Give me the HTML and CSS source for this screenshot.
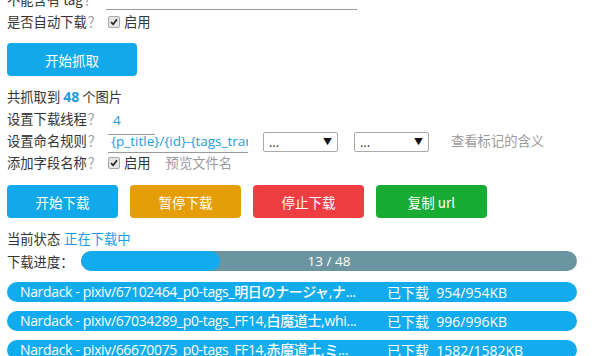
FILE: index.html
```html
<!DOCTYPE html>
<html lang="zh-CN">
<head>
<meta charset="utf-8">
<title>下载</title>
<link rel="stylesheet" href="styles.css">
</head>
<body>
<div class="panel">
  <div class="row">
    <span class="label">不能含有 tag<span class="q">？</span></span>
    <span class="line wide"></span>
  </div>
  <div class="row">
    <span class="label">是否自动下载<span class="q">？</span></span>
    <span class="check"><svg viewBox="0 0 12 12" width="12" height="12"><path d="M2.5 6.2 L5 8.8 L9.6 2.8" fill="none" stroke="#222" stroke-width="2"/></svg></span>
    <span class="opt">启用</span>
  </div>
  <div class="btn-row">
    <button class="btn blue">开始抓取</button>
  </div>
  <div class="row">共抓取到 <b class="num">48</b> 个图片</div>
  <div class="row">
    <span class="label">设置下载线程<span class="q">？</span></span>
    <span class="field thread">4</span>
  </div>
  <div class="row">
    <span class="label">设置命名规则<span class="q">？</span></span>
    <span class="field name">{p_title}/{id}-{tags_tran</span>
    <span class="select">...<span class="arrow">▼</span></span>
    <span class="select">...<span class="arrow">▼</span></span>
    <span class="muted hint">查看标记的含义</span>
  </div>
  <div class="row">
    <span class="label">添加字段名称<span class="q">？</span></span>
    <span class="check"><svg viewBox="0 0 12 12" width="12" height="12"><path d="M2.5 6.2 L5 8.8 L9.6 2.8" fill="none" stroke="#222" stroke-width="2"/></svg></span>
    <span class="opt">启用</span>
    <span class="muted preview">预览文件名</span>
  </div>
  <div class="actions">
    <button class="btn blue">开始下载</button>
    <button class="btn orange">暂停下载</button>
    <button class="btn red">停止下载</button>
    <button class="btn green">复制 url</button>
  </div>
  <div class="row">当前状态 <span class="status">正在下载中</span></div>
  <div class="row progress-row">
    <span class="plabel">下载进度：</span>
    <div class="bar">
      <div class="fill" style="width:28%"></div>
      <span class="bar-text">13 / 48</span>
    </div>
  </div>
  <ul class="list">
    <li class="item"><span class="fname">Nardack - pixiv/67102464_p0-tags_明日のナージャ,ナ...</span><span class="size"><span class="done">已下载</span>&nbsp;&nbsp;954/954KB</span></li>
    <li class="item"><span class="fname">Nardack - pixiv/67034289_p0-tags_FF14,白魔道士,whi...</span><span class="size"><span class="done">已下载</span>&nbsp;&nbsp;996/996KB</span></li>
    <li class="item"><span class="fname">Nardack - pixiv/66670075_p0-tags_FF14,赤魔道士,ミ...</span><span class="size"><span class="done">已下载</span>&nbsp;&nbsp;1582/1582KB</span></li>
  </ul>
</div>
</body>
</html>
```
FILE: styles.css
```css
* { box-sizing: border-box; }
html, body { margin: 0; padding: 0; background: #fff; overflow: hidden; }
body {
  font-family: "Noto Sans CJK SC", "Noto Sans", sans-serif;
  font-size: 13.3px;
  color: #333;
}
.panel {
  padding: 0 7px;
  margin-top: -11px;
}
.row {
  display: flex;
  align-items: center;
  height: 22px;
  line-height: 22px;
  white-space: nowrap;
}
.label { width: 101px; flex: none; }
.q { color: #999; margin-left: 1px; }
.line.wide {
  width: 251px;
  margin-left: -2px;
  height: 20px;
  border-bottom: 1px solid #999;
}
.check {
  width: 12px; height: 12px;
  border: 1px solid #a8a8a8;
  border-radius: 2px;
  background: #e6e6e6;
  display: inline-flex;
  align-items: center; justify-content: center;
  margin-right: 4px;
}
.check svg { width: 10px; height: 10px; }
.opt { color: #333; }
.btn {
  border: none;
  border-radius: 4px;
  color: #fff;
  font-family: inherit;
  font-size: 13.5px;
  height: 33px;
  width: 130px;
  padding: 0;
  cursor: pointer;
}
.btn-row { margin: 10px 0 10px; height: 33px; display: flex; }
.blue { background: #12a9eb; }
.orange { background: #e59e08; }
.red { background: #ef3e42; }
.green { background: #19ac34; }
.num { color: #1a9be0; font-family: "Open Sans", sans-serif; font-size: 14px; margin: 0 3px; }
.field {
  color: #1a9be0;
  border-bottom: 1px solid #999;
  height: 22px;
  line-height: 20px;
  padding-left: 5px;
  overflow: hidden;
  font-family: "Open Sans", "Noto Sans CJK SC", sans-serif;
  font-size: 13.5px;
}
.thread { width: 47px; margin-top: 10px; line-height: 14px; height: 22px; }
.name { width: 140px; margin-top: 2px; height: 22px; padding-left: 3px; }
.select {
  width: 75px; height: 20px;
  border: 1px solid #aaa;
  border-radius: 2px;
  margin-left: 15px;
  padding: 0 5px;
  display: flex;
  align-items: center;
  justify-content: space-between;
  line-height: 18px;
  font-size: 12px;
  color: #333;
  margin-top: 1px;
}
.select + .select { margin-left: 16px; }
.arrow { font-size: 9px; color: #111; }
.muted { color: #9a9a9a; }
.hint { margin-left: 22px; }
.preview { margin-left: 15px; }
.actions {
  display: flex;
  gap: 12px;
  margin: 11px 0 10px;
}
.actions .btn { width: 111px; }
.status { color: #1a9be0; margin-left: 4px; }
.progress-row { height: 22px; margin-bottom: 10px; }
.plabel { width: 74px; flex: none; margin-top: 2px; }
.bar {
  position: relative;
  width: 496px;
  height: 20px;
  border-radius: 10px;
  background: #6b95a1;
  overflow: hidden;
  margin-top: -1px;
}
.fill {
  height: 100%;
  border-radius: 10px;
  background: #12acee;
}
.bar-text {
  position: absolute;
  left: 0; right: 0; top: 0;
  text-align: center;
  color: #fff;
  line-height: 20px;
  font-size: 13.5px;
  font-family: "Open Sans", "Noto Sans CJK SC", sans-serif;
}
.list {
  list-style: none;
  margin: 0;
  padding: 0;
  display: flex;
  flex-direction: column;
  gap: 9px;
}
.item {
  width: 570px;
  height: 20px;
  border-radius: 10px;
  background: #12acee;
  color: #fff;
  display: flex;
  align-items: center;
  padding-left: 13px;
  white-space: nowrap;
  font-size: 14px;
  line-height: 20px;
  font-family: "Open Sans", "Noto Sans CJK SC", sans-serif;
  font-weight: 500;
  letter-spacing: -0.35px;
}
.fname { width: 367px; flex: none; overflow: hidden; }
.size { letter-spacing: 0; }
.done { font-weight: 400; font-family: "Noto Sans CJK SC", sans-serif; }
```
